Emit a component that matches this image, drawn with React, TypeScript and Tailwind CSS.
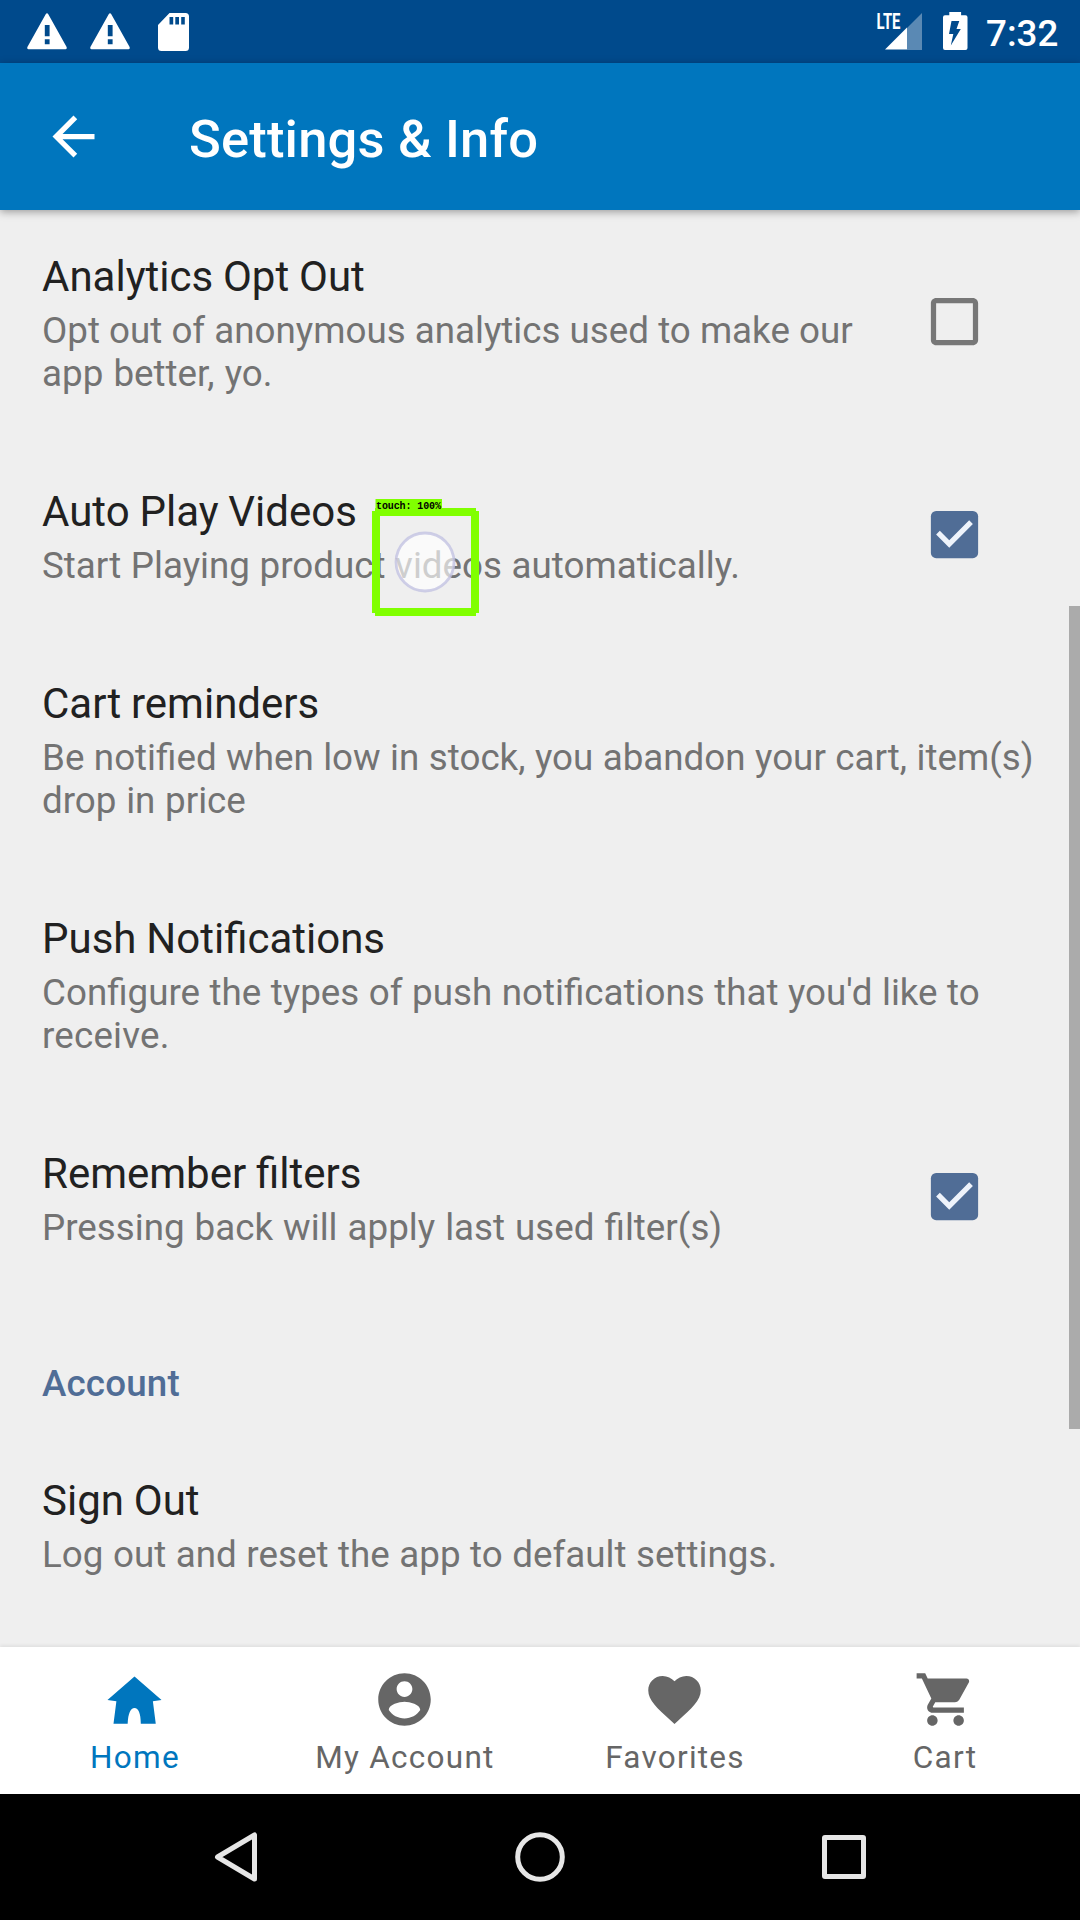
import React from 'react';

type Line = { text: string; spacing: string };
type Setting = { title: string; lines: Line[]; checked?: boolean };

const settings: Setting[] = [
  {
    title: 'Analytics Opt Out',
    lines: [
      { text: 'Opt out of anonymous analytics used to make our', spacing: '[word-spacing:0px]' },
      { text: 'app better, yo.', spacing: '[word-spacing:1px]' },
    ],
    checked: false,
  },
  {
    title: 'Auto Play Videos',
    lines: [{ text: 'Start Playing product videos automatically.', spacing: '[word-spacing:0.5px]' }],
    checked: true,
  },
  {
    title: 'Cart reminders',
    lines: [
      { text: 'Be notified when low in stock, you abandon your cart, item(s)', spacing: '[word-spacing:0.33px]' },
      { text: 'drop in price', spacing: '[word-spacing:0.6px]' },
    ],
  },
  {
    title: 'Push Notifications',
    lines: [
      { text: "Configure the types of push notifications that you'd like to", spacing: '[word-spacing:0.4px]' },
      { text: 'receive.', spacing: 'tracking-[0.2px]' },
    ],
  },
  {
    title: 'Remember filters',
    lines: [{ text: 'Pressing back will apply last used filter(s)', spacing: '[word-spacing:0.9px]' }],
    checked: true,
  },
];

const signOut: Setting = {
  title: 'Sign Out',
  lines: [{ text: 'Log out and reset the app to default settings.', spacing: '[word-spacing:0.45px]' }],
};

function Warning() {
  return (
    <svg width="40" height="37" viewBox="0 0 40 37" className="block">
      <path
        fillRule="evenodd"
        fill="#fff"
        d="M18.7 1.2q1.3-1.8 2.6 0L39.6 34q.6 2-1.2 2.3H1.6Q-.2 36 .4 34zM17.8 12v11.3h4.8V12zM17.8 26.3v5h4.8v-5z"
      />
    </svg>
  );
}

function SdCard() {
  return (
    <svg width="31" height="38" viewBox="0 0 31 38" className="block">
      <path
        fillRule="evenodd"
        fill="#fff"
        d="M11.5 0H27.5a3.5 3.5 0 0 1 3.5 3.5V34.5a3.5 3.5 0 0 1-3.5 3.5H3.5A3.5 3.5 0 0 1 0 34.5V12zM11.5 4v7.5h3.7V4zM17.3 4v7.5h3.7V4zM23.2 4v7.5h3.6V4z"
      />
    </svg>
  );
}

function StatusBar() {
  return (
    <div className="flex h-[63px] shrink-0 items-start bg-[#004a8c] pl-[27px]">
      <div className="flex pt-[13px]">
        <Warning />
        <div className="ml-[23px]">
          <Warning />
        </div>
        <div className="ml-7">
          <SdCard />
        </div>
      </div>
      <div className="ml-auto flex pr-[21px] pt-3">
        <svg width="46" height="39" viewBox="0 0 46 39" overflow="visible" className="block">
          <path d="M46 1v37H31V16z" fill="#5a89b4" />
          <path d="M9 37.5L31 15.5v22z" fill="#fff" />
          <text
            x="0.5"
            y="17.2"
            fill="#fff"
            fontFamily="Roboto, sans-serif"
            fontWeight="700"
            fontSize="22"
            textLength="24"
            lengthAdjust="spacingAndGlyphs"
          >
            LTE
          </text>
        </svg>
        <svg width="25" height="38" viewBox="0 0 25 38" className="ml-[21px] block">
          <path
            fillRule="evenodd"
            fill="#fff"
            d="M6.3 0h11.8v3.2H22.5a2 2 0 0 1 2 2V36a2 2 0 0 1-2 2H2a2 2 0 0 1-2-2V5.2a2 2 0 0 1 2-2H6.3zM8.5 9L6 22h4.3L7.8 33.5 17.8 17h-4.3L16.3 9z"
          />
        </svg>
        <div className="ml-[18px] w-[73px] whitespace-nowrap text-[36.75px] font-medium leading-[43px] text-white">7:32</div>
      </div>
    </div>
  );
}

function CheckBox({ checked }: { checked: boolean }) {
  return (
    <svg width="63" height="63" viewBox="0 0 24 24" className="block">
      {checked ? (
        <>
          <rect x="3" y="3" width="18" height="18" rx="2" fill="#506d96" />
          <path d="M10 17l-5-5 1.41-1.41L10 14.17l7.59-7.59L19 8z" fill="#eef3fb" />
        </>
      ) : (
        <path
          fill="#777"
          d="M19 5v14H5V5h14m0-2H5c-1.1 0-2 .9-2 2v14c0 1.1.9 2 2 2h14c1.1 0 2-.9 2-2V5c0-1.1-.9-2-2-2z"
        />
      )}
    </svg>
  );
}

function Row({ title, lines, checked }: Setting) {
  return (
    <div className="flex items-center justify-between pl-[42px] pr-[94px]">
      <div className="whitespace-nowrap pb-11 pt-12">
        <div className="text-[42px] leading-[49px] text-[#212121] [word-spacing:-0.6px]">{title}</div>
        <div className="mt-2 text-[36.75px] leading-[43px] text-[#737373]">
          {lines.map((line) => (
            <div key={line.text} className={line.spacing}>
              {line.text}
            </div>
          ))}
        </div>
      </div>
      {checked !== undefined && (
        <div className="mb-px">
          <CheckBox checked={checked} />
        </div>
      )}
    </div>
  );
}

function TouchMarker() {
  return (
    <div className="absolute left-[372px] top-[499px]">
      <svg width="107" height="118" viewBox="0 0 107 118" className="block">
        <circle cx="53" cy="63" r="29" fill="#fff" fillOpacity="0.65" stroke="#c3c3e2" strokeOpacity="0.8" strokeWidth="2.8" />
        <rect x="3.5" y="0" width="66.5" height="11" fill="#80ff00" />
        <path fillRule="evenodd" fill="#80ff00" d="M3 9H104V12H107V114H104V117H3V114H0V12H3zM8 17V109H99V17z" />
        <text
          x="4"
          y="10"
          fill="#000"
          fontFamily="'Liberation Mono', monospace"
          fontWeight="700"
          fontSize="10"
          textLength="65"
          lengthAdjust="spacing"
        >
          touch: 100%
        </text>
      </svg>
    </div>
  );
}

const tabs = [
  {
    label: 'Home',
    active: true,
    nudge: '-translate-x-px',
    path: 'M12 3.2L22.3 12.2 19 12.7 20.1 21.2H14.4C14.4 17.2 13.5 15.2 12 15.2S9.6 17.2 9.4 21.2H4L5.1 12.7 1.7 12.2z',
  },
  {
    label: 'My Account',
    nudge: '-translate-x-px',
    path: 'M12 2C6.48 2 2 6.48 2 12s4.48 10 10 10 10-4.48 10-10S17.52 2 12 2zm0 3c1.66 0 3 1.34 3 3s-1.34 3-3 3-3-1.34-3-3 1.34-3 3-3zm0 14.2c-2.5 0-4.71-1.28-6-3.22.03-1.99 4-3.08 6-3.08 1.99 0 5.97 1.09 6 3.08-1.29 1.94-3.5 3.22-6 3.22z',
  },
  {
    label: 'Favorites',
    nudge: '-translate-x-px',
    path: 'M12 21.35l-1.45-1.32C5.4 15.36 2 12.28 2 8.5 2 5.42 4.42 3 7.5 3c1.74 0 3.41.81 4.5 2.09C13.09 3.81 14.76 3 16.5 3 19.58 3 22 5.42 22 8.5c0 3.78-3.4 6.86-8.55 11.54L12 21.35z',
  },
  {
    label: 'Cart',
    nudge: 'translate-x-0',
    path: 'M7 18c-1.1 0-1.99.9-1.99 2S5.9 22 7 22s2-.9 2-2-.9-2-2-2zM1 2v2h2l3.6 7.59-1.35 2.45c-.16.28-.25.61-.25.96 0 1.1.9 2 2 2h12v-2H7.42c-.14 0-.25-.11-.25-.25l.03-.12.9-1.63h7.45c.75 0 1.41-.41 1.75-1.03l3.58-6.49c.08-.14.12-.31.12-.48 0-.55-.45-1-1-1H5.21l-.94-2H1zm16 16c-1.1 0-1.99.9-1.99 2s.89 2 1.99 2 2-.9 2-2-.9-2-2-2z',
  },
];

export default function App() {
  return (
    <div className="relative flex h-[1920px] w-[1080px] flex-col overflow-hidden bg-[#efefef] font-['Roboto',sans-serif]">
      <StatusBar />
      <header className="z-10 flex h-[147px] shrink-0 items-center bg-[#0076be] pl-[42px] shadow-[0_2px_8px_rgba(0,0,0,0.35)]">
        <svg width="63" height="63" viewBox="0 0 24 24" className="block">
          <path d="M20 11H7.83l5.59-5.59L12 4l-8 8 8 8 1.41-1.41L7.83 13H20v-2z" fill="#fff" />
        </svg>
        <h1 className="ml-[84px] pt-1 text-[52.5px] font-medium leading-[62px] tracking-[0.18px] text-white">
          Settings &amp; Info
        </h1>
      </header>

      <main className="-mt-1.5 h-[1443px] shrink-0 overflow-hidden">
        {settings.map((s) => (
          <Row key={s.title} {...s} />
        ))}
        <div className="h-[135px] pl-[42px] pt-[69px] text-[36.75px] font-medium leading-[43px] tracking-[0.15px] text-[#506d96]">
          Account
        </div>
        <Row {...signOut} />
      </main>

      <nav className="z-10 grid h-[147px] shrink-0 grid-cols-4 bg-white shadow-[0_-2px_3px_rgba(0,0,0,0.06)]">
        {tabs.map((t) => (
          <div
            key={t.label}
            className={`flex flex-col items-center pt-[21px] ${t.active ? 'text-[#0076be]' : 'text-[#666]'}`}
          >
            <svg width="63" height="63" viewBox="0 0 24 24" className={`block ${t.nudge}`}>
              <path d={t.path} fill="currentColor" />
            </svg>
            <div className="mt-2 text-[31.5px] leading-[37px] tracking-[1.26px]">{t.label}</div>
          </div>
        ))}
      </nav>

      <footer className="flex h-[126px] shrink-0 items-center bg-black">
        <svg
          width="1080"
          height="126"
          viewBox="0 0 1080 126"
          fill="none"
          stroke="#e6e6e6"
          strokeWidth="5"
          strokeLinejoin="round"
        >
          <path d="M254.5 41V85L217.5 63z" />
          <circle cx="540" cy="63" r="22.3" />
          <rect x="824.5" y="43.5" width="39" height="39" rx="0.5" />
        </svg>
      </footer>

      <div className="absolute right-0 top-[606px] h-[823px] w-[11px] bg-[#ababab]" />
      <TouchMarker />
    </div>
  );
}
